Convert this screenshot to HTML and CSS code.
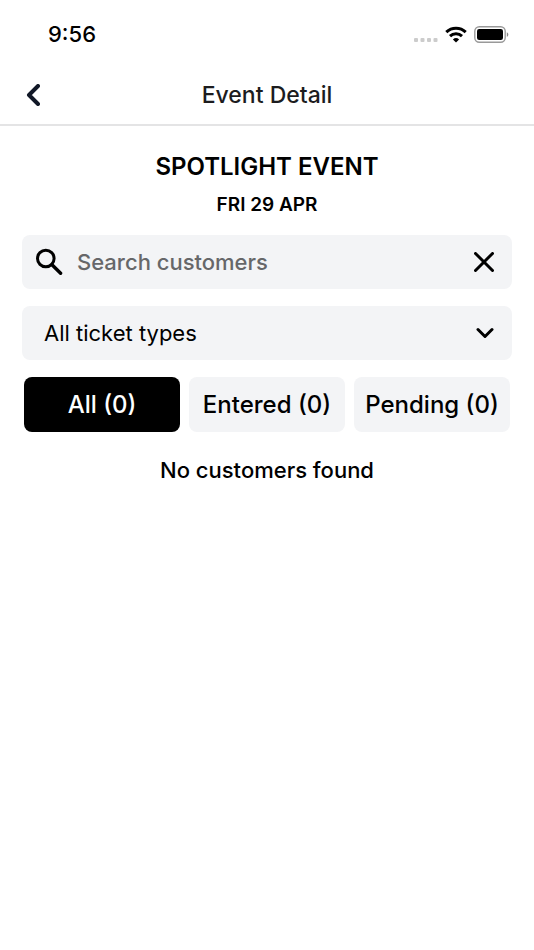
FILE: index.html
```html
<!DOCTYPE html>
<html lang="en">
<head>
<meta charset="utf-8">
<meta name="viewport" content="width=device-width, initial-scale=1">
<title>Event Detail</title>
<link rel="stylesheet" href="styles.css">
</head>
<body>
<div class="status-bar">
  <time class="clock">9:56</time>
  <div class="status-icons">
    <svg class="cell" viewBox="0 0 24 4" aria-hidden="true"><rect x="0" y="0" width="4" height="4" rx="1"/><rect x="6.500" y="0" width="4" height="4" rx="1"/><rect x="13" y="0" width="4" height="4" rx="1"/><rect x="19.500" y="0" width="4" height="4" rx="1"/></svg>
    <svg class="wifi" viewBox="0 0 22 17" aria-hidden="true"><path d="M1.300 6.200a14 14 0 0 1 19.400 0M5 10.100a8.700 8.700 0 0 1 12 0" fill="none" stroke="#000" stroke-width="3"/><path d="M11 16.600 7.900 13.500a4.500 4.500 0 0 1 6.200 0z"/></svg>
    <svg class="battery" viewBox="0 0 35 17" aria-hidden="true"><rect x=".8" y=".8" width="30.400" height="15.400" rx="4.500" fill="none" stroke="#999" stroke-width="1.400"/><rect x="3" y="3" width="26" height="11" rx="2.200"/><path d="M32.800 6.200c2 .8 2 3.800 0 4.600z" fill="#888"/></svg>
  </div>
</div>
<header class="nav">
  <button class="icon-button" type="button" aria-label="Back">
    <svg class="back" viewBox="0 0 14 22" aria-hidden="true"><path d="M12 2 3 11l9 9"/></svg>
  </button>
  <h1 class="nav-title">Event Detail</h1>
</header>
<main class="content">
  <h2 class="event-name">SPOTLIGHT EVENT</h2>
  <p class="event-date">FRI 29 APR</p>
  <div class="field search">
    <svg class="glass" viewBox="0 0 28 28" aria-hidden="true"><circle cx="10.800" cy="10.500" r="8.300"/><path d="m17 16.700 8.600 8.600" stroke-width="3.400"/></svg>
    <input class="search-input" type="text" placeholder="Search customers" aria-label="Search customers">
    <button class="icon-button" type="button" aria-label="Clear search">
      <svg class="cross" viewBox="0 0 20 20" aria-hidden="true"><path d="m1.500 1.500 17 17m0-17-17 17"/></svg>
    </button>
  </div>
  <div class="field picker">
    <select class="picker-select" aria-label="Ticket type"><option>All ticket types</option></select>
    <svg class="chevron" viewBox="0 0 18 12" aria-hidden="true"><path d="m2 2.500 7 7 7-7"/></svg>
  </div>
  <div class="tabs">
    <button class="tab tab-active" type="button">All (0)</button>
    <button class="tab" type="button">Entered (0)</button>
    <button class="tab" type="button">Pending (0)</button>
  </div>
  <p class="empty">No customers found</p>
</main>
</body>
</html>
```
FILE: styles.css
```css
* {
  box-sizing: border-box;
}

body {
  margin: 0;
  background: #fff;
  color: #000;
  font-family: Inter, "Liberation Sans", sans-serif;
}

h1, h2, p {
  margin: 0;
}

button, input, select {
  font: inherit;
  color: inherit;
  border: 0;
  padding: 0;
  background: none;
}

svg {
  display: block;
  flex: none;
}

.status-bar {
  display: flex;
  align-items: center;
  justify-content: space-between;
  height: 68px;
  padding: 0 25px 0 48px;
}

.clock {
  font-size: 22px;
  font-weight: 500;
}

.status-icons {
  display: flex;
  align-items: center;
  gap: 7px;
}

.cell {
  width: 24px;
  height: 4px;
  margin-top: 12px;
  fill: #ccc;
}

.wifi {
  width: 22px;
  height: 17px;
}

.battery {
  width: 35px;
  height: 17px;
}

.nav {
  display: grid;
  grid-template-columns: 32px 1fr 32px;
  align-items: center;
  height: 58px;
  padding: 0 20px 2px;
  border-bottom: 2px solid #e4e4e5;
}

.nav-title {
  color: #1c1c1e;
  font-size: 23px;
  font-weight: 500;
  line-height: 28px;
  text-align: center;
}

.icon-button {
  display: grid;
  place-items: center;
  width: 32px;
  height: 32px;
  flex: none;
}

.icon-button svg,
.glass,
.chevron {
  fill: none;
  stroke: currentColor;
  stroke-width: 3;
  stroke-linecap: round;
  stroke-linejoin: round;
}

.icon-button .back {
  width: 14px;
  height: 22px;
  margin-right: 6px;
  color: #111827;
  stroke-width: 4;
}

.content {
  padding: 24px 22px;
}

.event-name {
  font-size: 24px;
  font-weight: 600;
  line-height: 34px;
  text-align: center;
}

.event-date {
  margin-top: 7px;
  font-size: 19px;
  font-weight: 600;
  line-height: 28px;
  text-align: center;
}

.field {
  display: flex;
  align-items: center;
  height: 54px;
  margin-top: 17px;
  border-radius: 8px;
  background: #f3f4f6;
}

.event-date + .field {
  margin-top: 16px;
}

.search {
  padding: 0 12px 0 13px;
}

.glass {
  width: 28px;
  height: 28px;
}

.search-input {
  flex: 1;
  min-width: 0;
  height: 100%;
  margin-left: 14px;
  font-size: 22px;
  font-weight: 500;
}

.search-input::placeholder {
  color: #666769;
  opacity: 1;
}

.cross {
  width: 20px;
  height: 20px;
}

.picker {
  display: grid;
}

.picker-select,
.chevron {
  grid-area: 1 / 1;
}

.picker-select {
  width: 100%;
  height: 54px;
  padding: 0 56px 0 22px;
  appearance: none;
  font-size: 22px;
}

.chevron {
  width: 18px;
  height: 12px;
  margin-right: 18px;
  justify-self: end;
  pointer-events: none;
}

.tabs {
  display: grid;
  grid-template-columns: repeat(3, 1fr);
  gap: 9px;
  margin-top: 17px;
  padding: 0 2px;
}

.tab {
  height: 55px;
  border-radius: 8px;
  background: #f3f4f6;
  font-size: 24px;
  font-weight: 500;
  white-space: nowrap;
}

.tab-active {
  background: #000;
  color: #fff;
}

.empty {
  margin-top: 24px;
  font-size: 22px;
  font-weight: 500;
  line-height: 28px;
  text-align: center;
}
```
